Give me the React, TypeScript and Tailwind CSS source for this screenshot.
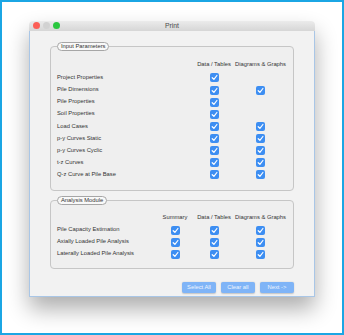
import type { ReactNode } from 'react';

const INPUT_ROWS: { label: string; graphs: boolean }[] = [
  { label: 'Project Properties', graphs: false },
  { label: 'Pile Dimensions', graphs: true },
  { label: 'Pile Properties', graphs: false },
  { label: 'Soil Properties', graphs: false },
  { label: 'Load Cases', graphs: true },
  { label: 'p-y Curves Static', graphs: true },
  { label: 'p-y Curves Cyclic', graphs: true },
  { label: 't-z Curves', graphs: true },
  { label: 'Q-z Curve at Pile Base', graphs: true },
];

const ANALYSIS_ROWS = ['Pile Capacity Estimation', 'Axially Loaded Pile Analysis', 'Laterally Loaded Pile Analysis'];

export default function App() {
  return (
    <div
      className="h-[335px] w-[344px] border-2 border-[#1ba6e4] bg-white pl-[27px] pt-[19px] text-[#333]"
      style={{ fontFamily: '"Liberation Sans", Arial, sans-serif' }}
    >
      <div className="flex h-[276px] w-[286px] flex-col rounded-t-[4px] shadow-[0_12px_22px_rgba(0,0,0,0.32)]">
        {/* Title bar */}
        <div className="relative flex h-[11px] items-center rounded-t-[4px] bg-gradient-to-b from-[#ebebeb] to-[#d6d6d6] px-[4px]">
          <div className="flex gap-[3px]">
            <span className="h-[7px] w-[7px] rounded-full bg-[#fc5f57]" />
            <span className="h-[7px] w-[7px] rounded-full bg-[#d2d2d2]" />
            <span className="h-[7px] w-[7px] rounded-full bg-[#2ac73f]" />
          </div>
          <span className="absolute inset-x-0 text-center text-[6.8px] leading-none text-[#4a4a4a]">Print</span>
        </div>

        {/* Body */}
        <div className="flex flex-1 flex-col border border-t-0 border-[#a9c6e6] bg-[#f2f2f2] px-[20px] pb-[3px] pt-[11px]">
          <Group title="Input Parameters" top="pt-[7px]" bottom="pb-[9px]">
            <div className="grid h-[14px] grid-cols-[1fr_40px_53px] items-center">
              <span />
              <Head>Data / Tables</Head>
              <Head>Diagrams &amp; Graphs</Head>
            </div>
            {INPUT_ROWS.map((r) => (
              <div key={r.label} className="grid h-[12.125px] grid-cols-[1fr_40px_53px] items-center">
                <Label>{r.label}</Label>
                <Box />
                {r.graphs ? <Box /> : <span />}
              </div>
            ))}
          </Group>

          <div className="mt-[5px]">
            <Group title="Analysis Module" top="pt-[6px]" bottom="pb-[8px]">
              <div className="grid h-[13px] grid-cols-[1fr_38px_40px_53px] items-center">
                <span />
                <Head>Summary</Head>
                <Head>Data / Tables</Head>
                <Head>Diagrams &amp; Graphs</Head>
              </div>
              {ANALYSIS_ROWS.map((l) => (
                <div key={l} className="grid h-[12px] grid-cols-[1fr_38px_40px_53px] items-center">
                  <Label>{l}</Label>
                  <Box />
                  <Box />
                  <Box />
                </div>
              ))}
            </Group>
          </div>

          <div className="mt-[13px] flex justify-end gap-[5px]">
            <Btn>Select All</Btn>
            <Btn>Clear all</Btn>
            <Btn>Next -&gt;</Btn>
          </div>
        </div>
      </div>
    </div>
  );
}

function Group({ title, top, bottom, children }: { title: string; top: string; bottom: string; children: ReactNode }) {
  return (
    <fieldset className={`rounded-[4px] border border-[#c6c6c6] bg-[#efefef] px-[6px] ${top} ${bottom}`}>
      <legend className="ml-0 h-[9px] rounded-full border border-[#a6a6a6] bg-[#f9f9f9] px-[3px] text-[5.8px] leading-[7px]">
        {title}
      </legend>
      {children}
    </fieldset>
  );
}

function Head({ children }: { children: ReactNode }) {
  return <span className="whitespace-nowrap text-center text-[5.8px] leading-none">{children}</span>;
}

function Label({ children }: { children: ReactNode }) {
  return <span className="whitespace-nowrap text-[5.8px] leading-none">{children}</span>;
}

function Box() {
  return (
    <span className="flex justify-center">
      <span className="flex h-[9px] w-[9px] items-center justify-center rounded-[2px] bg-[#3d8ef2]">
        <svg width="7" height="7" viewBox="0 0 7 7" fill="none">
          <path d="M1.2 3.7 L2.9 5.3 L5.9 1.5" stroke="white" strokeWidth="1.2" strokeLinecap="round" strokeLinejoin="round" />
        </svg>
      </span>
    </span>
  );
}

function Btn({ children }: { children: ReactNode }) {
  return (
    <button className="h-[11px] w-[34px] rounded-[2px] bg-[#7fb4f7] text-[5.8px] leading-none text-[#eef5ff] shadow-[0_0.5px_1.5px_rgba(0,0,0,0.2)]">
      {children}
    </button>
  );
}
